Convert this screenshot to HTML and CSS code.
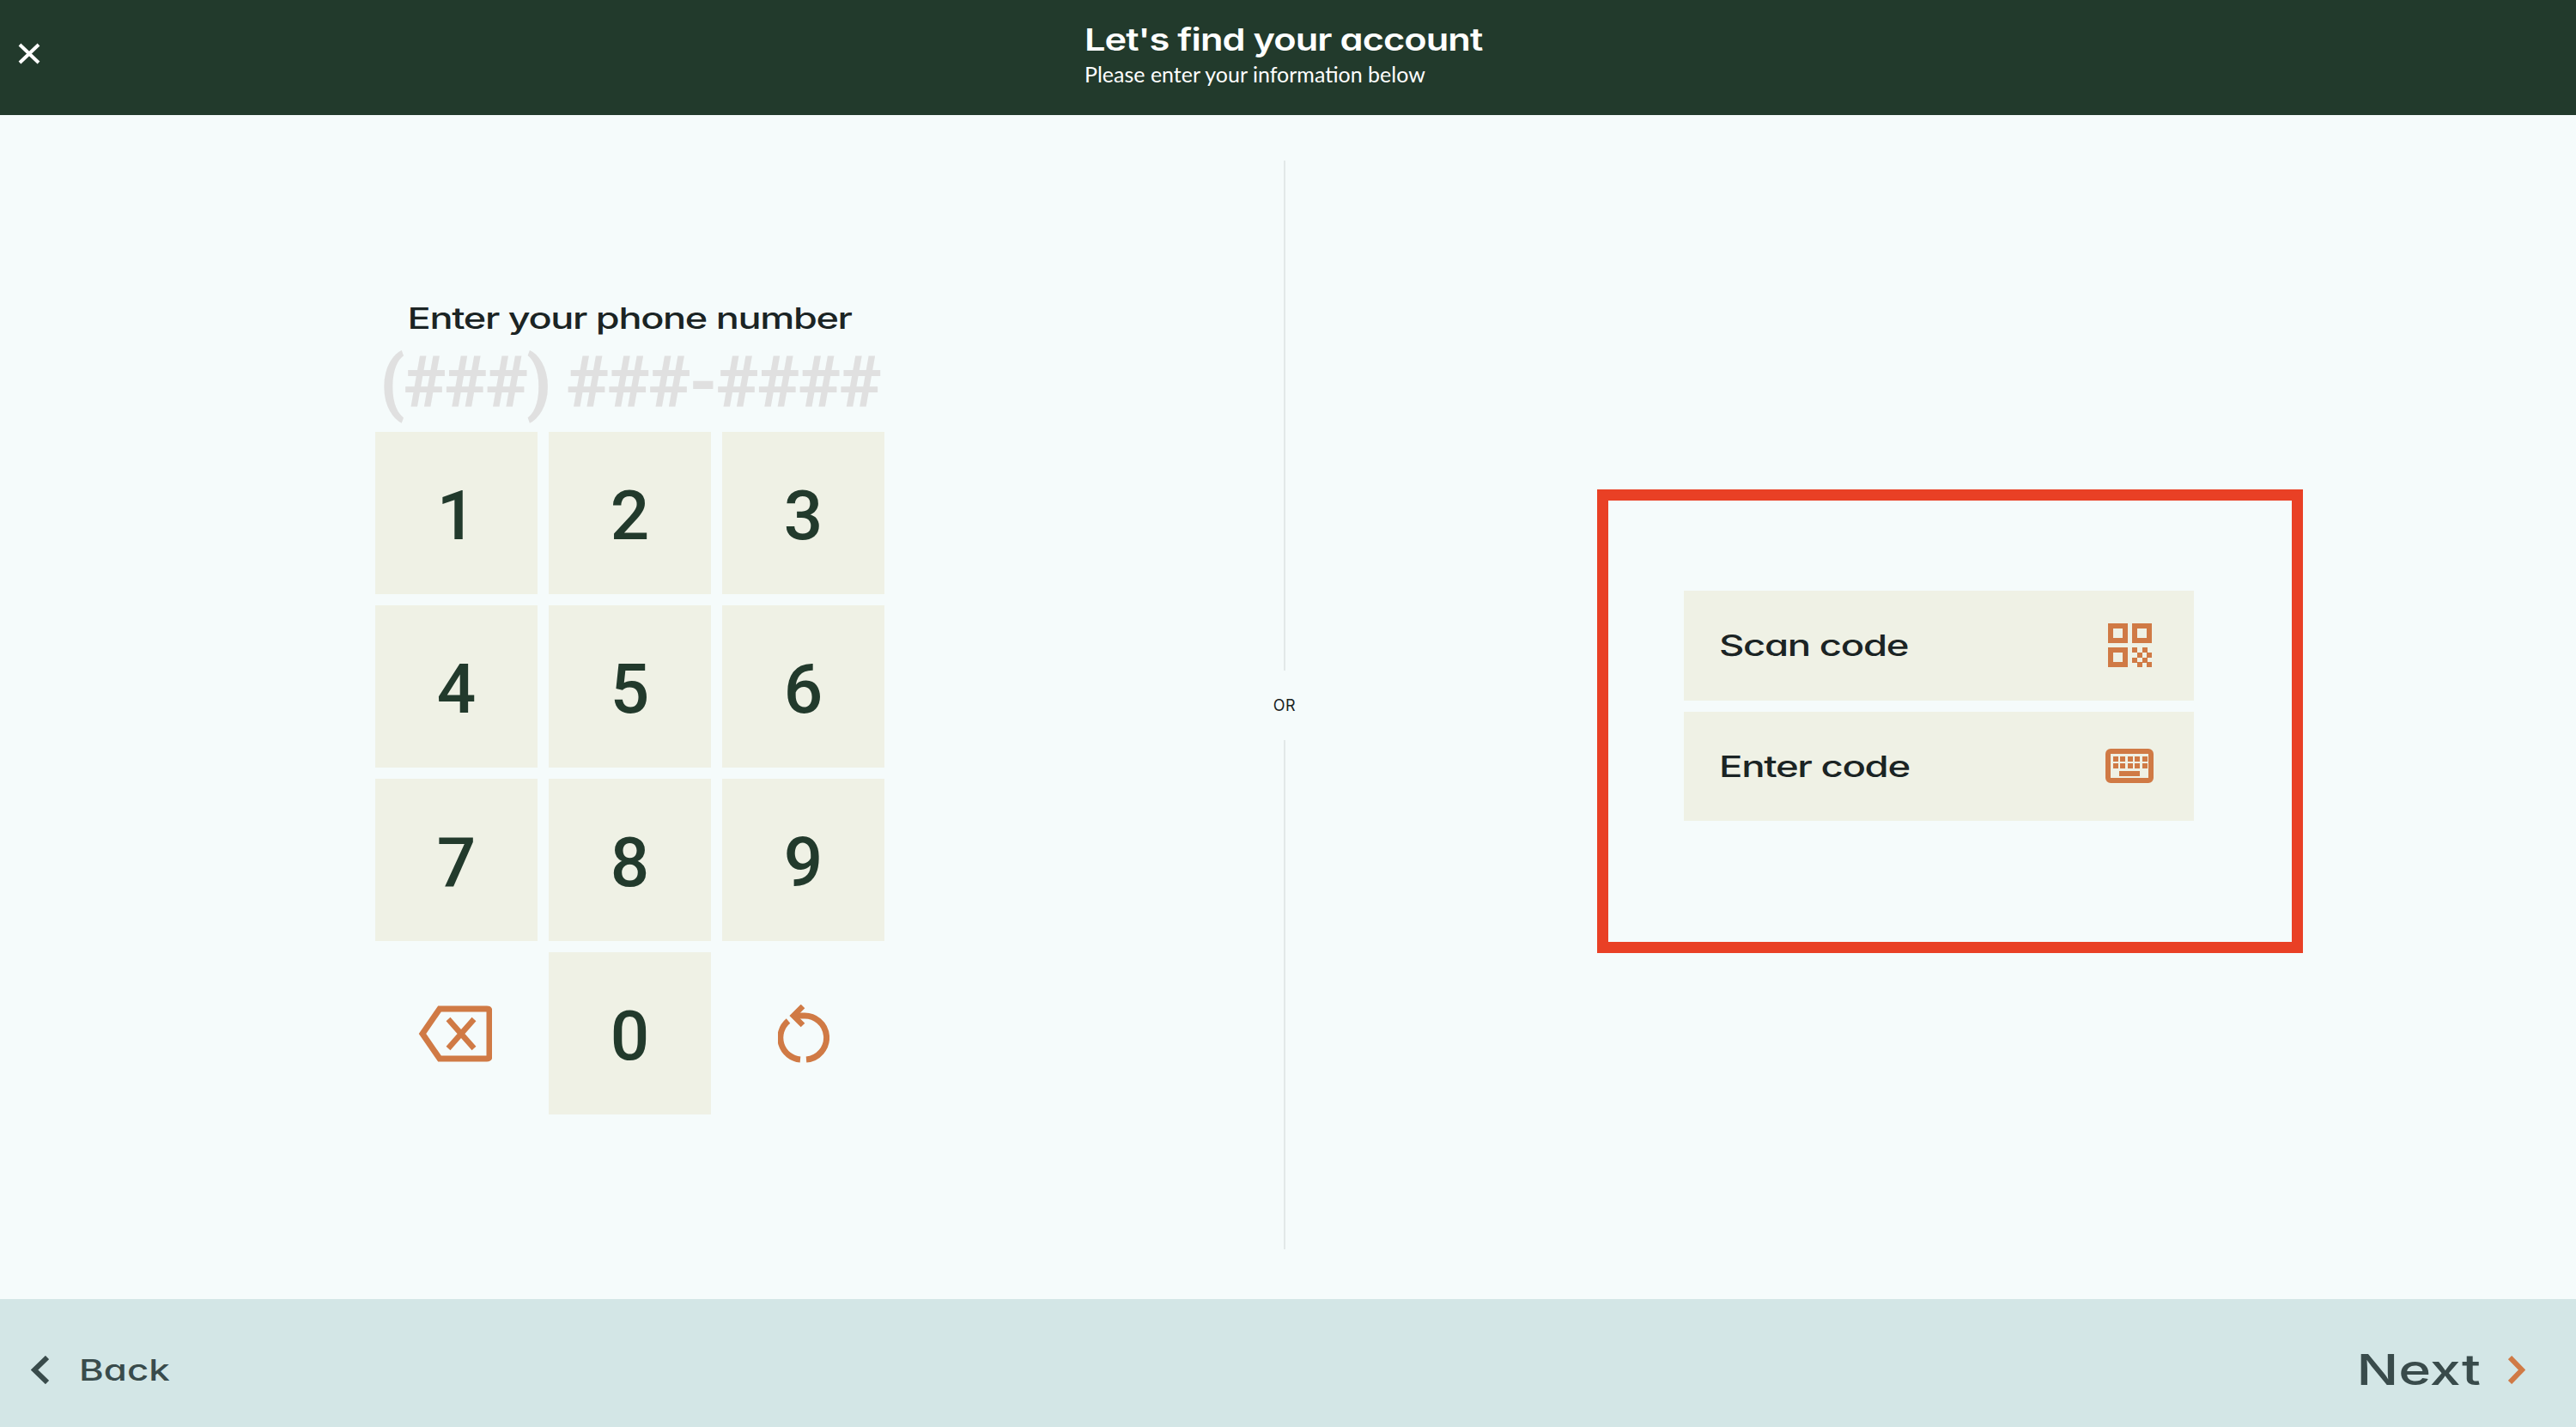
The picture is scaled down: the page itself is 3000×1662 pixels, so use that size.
FILE: index.html
```html
<!DOCTYPE html>
<html lang="en">
<head>
<meta charset="utf-8">
<title>Let's find your account</title>
<link rel="stylesheet" href="styles.css">
</head>
<body>
<header class="topbar">
  <button class="close" aria-label="Close">
    <svg width="26" height="25" viewBox="0 0 26 25"><path d="M2 2 L24 23 M24 2 L2 23" fill="none" stroke="#fff" stroke-width="4"/></svg>
  </button>
  <div class="heading">
    <h1 class="title"><span class="wide-title">Let's find your account</span></h1>
    <p class="subtitle">Please enter your information below</p>
  </div>
</header>
<main class="content">
  <section class="phone">
    <h2 class="phone-label"><span class="wide-label">Enter your phone number</span></h2>
    <div class="phone-mask">(###) ###-####</div>
    <div class="keypad">
      <button class="key">1</button>
      <button class="key">2</button>
      <button class="key">3</button>
      <button class="key">4</button>
      <button class="key">5</button>
      <button class="key">6</button>
      <button class="key">7</button>
      <button class="key">8</button>
      <button class="key">9</button>
      <button class="key key-icon" aria-label="Delete">
        <svg class="icon-delete" width="86" height="66" viewBox="0 0 86 66"><path d="M25 4 H80 Q83 4 83 7 V59 Q83 62 80 62 H25 L5 33 Z" fill="none" stroke="#d07a45" stroke-width="7" stroke-linejoin="miter"/><path d="M35 16 L65 50 M65 16 L35 50" fill="none" stroke="#d07a45" stroke-width="6.5"/></svg>
      </button>
      <button class="key">0</button>
      <button class="key key-icon" aria-label="Reset">
        <svg width="60" height="68" viewBox="0 0 60 68"><path d="M20 13 H29 A25.5 25.5 0 0 1 33 64 M26 64 A25.5 25.5 0 0 1 12 19" fill="none" stroke="#d07a45" stroke-width="7"/><path d="M29 2 L18 13 L29 24" fill="none" stroke="#d07a45" stroke-width="6.5"/></svg>
      </button>
    </div>
  </section>
  <div class="divider">
    <span class="rule"></span>
    <span class="or">OR</span>
    <span class="rule"></span>
  </div>
  <section class="codes">
    <div class="highlight">
      <button class="code-btn">
        <span class="wide-code">Scan code</span>
        <svg class="qr" width="51" height="51" viewBox="0 0 51 51" fill="#d07a45">
          <path fill-rule="evenodd" d="M0 0H23V23H0ZM6 6V17H17V6Z"/>
          <path fill-rule="evenodd" d="M28 0H51V23H28ZM34 6V17H45V6Z"/>
          <path fill-rule="evenodd" d="M0 28H23V51H0ZM6 34V45H17V34Z"/>
          <path d="M28 28h6v6h-6zM40 28h6v6h-6zM34 34h6v6h-6zM45 34h6v6h-6zM28 40h6v6h-6zM40 40h6v6h-6zM34 45h6v6h-6zM45 45h6v6h-6z"/>
        </svg>
      </button>
      <button class="code-btn">
        <span class="wide-code">Enter code</span>
        <svg class="kbd" width="56" height="40" viewBox="0 0 56 40" fill="#d07a45">
          <rect x="3" y="3" width="50" height="34" rx="3" fill="none" stroke="#d07a45" stroke-width="6"/>
          <path d="M9 9h6v6H9zM17 9h6v6h-6zM26 9h6v6h-6zM34 9h6v6h-6zM43 9h6v6h-6zM9 17h6v6H9zM17 17h6v6h-6zM26 17h6v6h-6zM34 17h6v6h-6zM43 17h6v6h-6zM16 26h24v6H16z"/>
        </svg>
      </button>
    </div>
  </section>
</main>
<footer class="bottombar">
  <button class="nav nav-back">
    <svg width="21" height="33" viewBox="0 0 21 33"><path d="M19 2 L4 16.5 L19 31" fill="none" stroke="#394b4b" stroke-width="6"/></svg>
    <span class="wide-back">Back</span>
  </button>
  <button class="nav nav-next">
    <span class="wide-next">Next</span>
    <svg width="20" height="33" viewBox="0 0 20 33"><path d="M2 2 L16 16.5 L2 31" fill="none" stroke="#d07a45" stroke-width="6"/></svg>
  </button>
</footer>
</body>
</html>
```
FILE: styles.css
```css
* { box-sizing: border-box; }
html, body { margin: 0; padding: 0; }
body {
  width: 3000px;
  height: 1662px;
  display: flex;
  flex-direction: column;
  background: #f5fbfb;
  overflow: hidden;
  font-family: "Inter", "Liberation Sans", sans-serif;
  font-feature-settings: "cv11";
}
button {
  border: 0;
  background: none;
  padding: 0;
  margin: 0;
  font: inherit;
  color: inherit;
}
h1, h2, p { margin: 0; font: inherit; }

/* Top bar */
.topbar {
  height: 134px;
  flex: none;
  background: #223a2c;
  color: #fff;
  display: grid;
  grid-template-columns: 1263px 474px 1fr;
  align-items: start;
}
.close {
  width: 26px;
  height: 25px;
  margin: 50px 0 0 21px;
  display: flex;
}
.heading { grid-column: 2; padding-top: 24px; }
.title {
  font-size: 36px;
  line-height: 44px;
  font-weight: 600;
  letter-spacing: -0.8px;
  white-space: nowrap;
}
.wide-title { display: inline-block; transform: scaleX(1.205); transform-origin: left; }
.subtitle {
  font-family: "Lato", sans-serif;
  font-size: 25px;
  line-height: 30px;
  margin-top: 3px;
  white-space: nowrap;
}

/* Main */
.content { flex: 1; display: flex; min-height: 0; }
.phone {
  width: 1495px;
  flex: none;
  display: flex;
  flex-direction: column;
  align-items: center;
  padding: 215px 28px 0 0;
}
.phone-label {
  font-size: 34px;
  line-height: 44px;
  font-weight: 500;
  letter-spacing: -1px;
  color: #1b2424;
  white-space: nowrap;
}
.wide-label { display: inline-block; transform: scaleX(1.325); }
.phone-mask {
  font-family: "Roboto", sans-serif;
  font-weight: 700;
  font-size: 84px;
  line-height: 90px;
  letter-spacing: -2px;
  color: #e0e0e0;
  margin-top: 8px;
  white-space: nowrap;
}
.keypad {
  display: grid;
  grid-template-columns: repeat(3, 189px);
  grid-auto-rows: 189px;
  gap: 13px;
  margin-top: 12px;
}
.key {
  display: flex;
  align-items: center;
  justify-content: center;
  padding-top: 6px;
  background: #eff1e5;
  font-family: "Roboto", sans-serif;
  font-weight: 500;
  font-size: 80px;
  color: #223a2c;
}
.key-icon { background: none; padding-top: 0; }
.icon-delete { margin-right: 4px; }

/* Divider */
.divider {
  width: 2px;
  flex: none;
  margin: 53px 0 58px;
  display: flex;
  flex-direction: column;
  align-items: center;
  gap: 0;
}
.rule { flex: 1; width: 2px; background: #e2e8e8; }
.rule:first-child { flex: none; height: 594px; }
.or {
  height: 81px;
  display: flex;
  align-items: center;
  font-size: 18px;
  font-weight: 400;
  color: #1b2424;
  letter-spacing: 0.5px;
}

/* Codes */
.codes { flex: 1; padding: 436px 0 0 363px; }
.highlight {
  width: 822px;
  height: 540px;
  border: 13px solid #e94025;
  padding: 105px 114px 0 88px;
  display: flex;
  flex-direction: column;
  gap: 13px;
}
.code-btn {
  height: 127.5px;
  background: #eff1e5;
  display: flex;
  align-items: center;
  justify-content: space-between;
  padding: 0 47px 0 41px;
  font-size: 34px;
  font-weight: 500;
  letter-spacing: -1px;
  color: #1b2424;
}
.wide-code { display: inline-block; transform: scaleX(1.34); transform-origin: left; }
.qr { margin-right: 2px; }

/* Bottom bar */
.bottombar {
  height: 149px;
  flex: none;
  background: #d3e6e6;
  display: flex;
  align-items: center;
  justify-content: space-between;
  padding: 15px 59px 0 36px;
}
.nav { display: flex; align-items: center; color: #394b4b; font-weight: 500; }
.nav-back { gap: 35px; font-size: 34px; }
.nav-next { gap: 32px; font-size: 50px; }
.wide-back { display: inline-block; transform: scaleX(1.29); transform-origin: left; }
.wide-next { display: inline-block; transform: scaleX(1.29); transform-origin: right; }
```
